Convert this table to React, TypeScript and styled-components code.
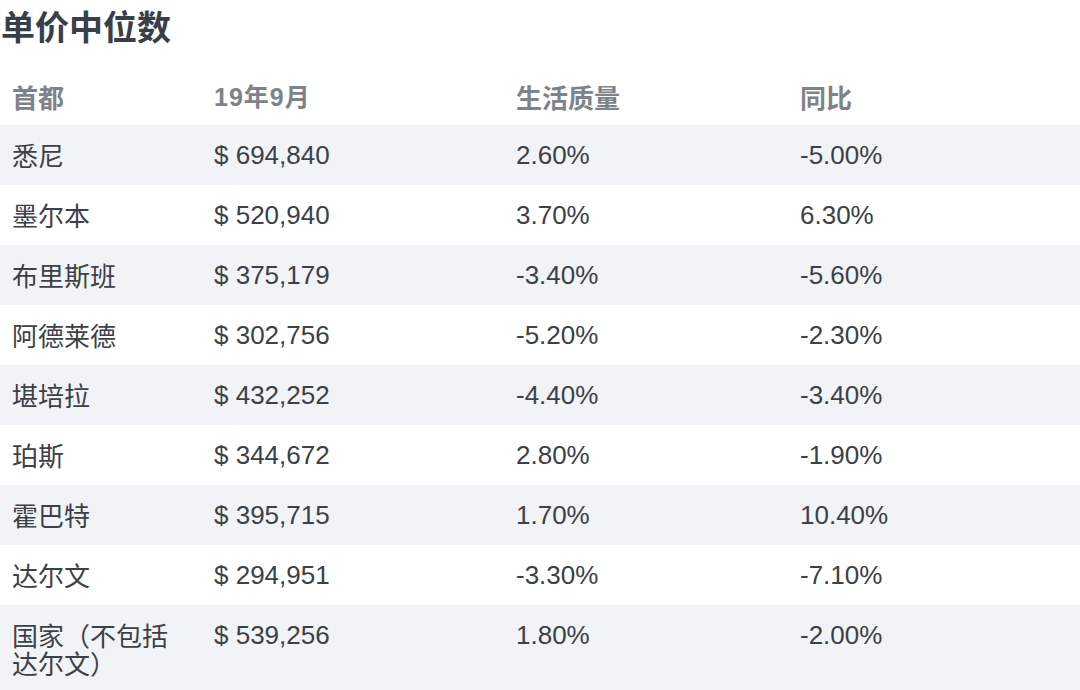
import React from "react";
import styled, { createGlobalStyle } from "styled-components";

const Global = createGlobalStyle`
  html, body { margin: 0; padding: 0; background: #ffffff; }
  body { font-family: "Liberation Sans", "Noto Sans CJK SC", sans-serif; }
`;

const Page = styled.div`
  width: 1080px;
  height: 690px;
  overflow: hidden;
  background: #ffffff;
`;

const Title = styled.h1`
  margin: 0;
  padding: 4px 0 0 1px;
  height: 67px;
  box-sizing: border-box;
  font-size: 34px;
  line-height: 44px;
  font-weight: 700;
  color: #3a3e46;
  font-family: "Noto Sans CJK SC", sans-serif;
`;

const Grid = styled.div`
  display: grid;
  grid-template-columns: 202px 302px 284px 1fr;
`;

const Row = styled.div<{ $shaded?: boolean; $header?: boolean }>`
  display: contents;
  & > div {
    background: ${(p) => (p.$shaded ? "#f2f3f6" : "#ffffff")};
    ${(p) =>
      p.$header
        ? `height: 58px; padding-top: 16px; color: #7e8289; font-weight: 700; font-size: 25px; letter-spacing: 1px;`
        : `height: auto; min-height: 60px; padding-top: 16px; padding-bottom: 16px; color: #3c4048; font-size: 26px;`}
  }
`;

const Cell = styled.div`
  box-sizing: border-box;
  padding-left: 12px;
  padding-right: 18px;
  line-height: 28px;
  font-family: "Liberation Sans", "Noto Sans CJK SC", sans-serif;
`;

const CjkText = styled.span<{ $bold?: boolean }>`
  display: block;
  line-height: 28px;
  font-size: 26px;
  letter-spacing: 0;
  font-family: "Noto Sans CJK SC", sans-serif;
  font-weight: ${(p) => (p.$bold ? 700 : 400)};
`;

const rows: [string, string, string, string][] = [
  ["悉尼", "$ 694,840", "2.60%", "-5.00%"],
  ["墨尔本", "$ 520,940", "3.70%", "6.30%"],
  ["布里斯班", "$ 375,179", "-3.40%", "-5.60%"],
  ["阿德莱德", "$ 302,756", "-5.20%", "-2.30%"],
  ["堪培拉", "$ 432,252", "-4.40%", "-3.40%"],
  ["珀斯", "$ 344,672", "2.80%", "-1.90%"],
  ["霍巴特", "$ 395,715", "1.70%", "10.40%"],
  ["达尔文", "$ 294,951", "-3.30%", "-7.10%"],
  ["国家（不包括达尔文）", "$ 539,256", "1.80%", "-2.00%"],
];

export default function App() {
  return (
    <Page>
      <Global />
      <Title>单价中位数</Title>
      <Grid>
        <Row $header>
          <Cell><CjkText $bold>首都</CjkText></Cell>
          <Cell>19年9月</Cell>
          <Cell><CjkText $bold>生活质量</CjkText></Cell>
          <Cell><CjkText $bold>同比</CjkText></Cell>
        </Row>
        {rows.map((r, i) => (
          <Row key={r[0]} $shaded={i % 2 === 0}>
            <Cell><CjkText>{r[0]}</CjkText></Cell>
            <Cell>{r[1]}</Cell>
            <Cell>{r[2]}</Cell>
            <Cell>{r[3]}</Cell>
          </Row>
        ))}
      </Grid>
    </Page>
  );
}
